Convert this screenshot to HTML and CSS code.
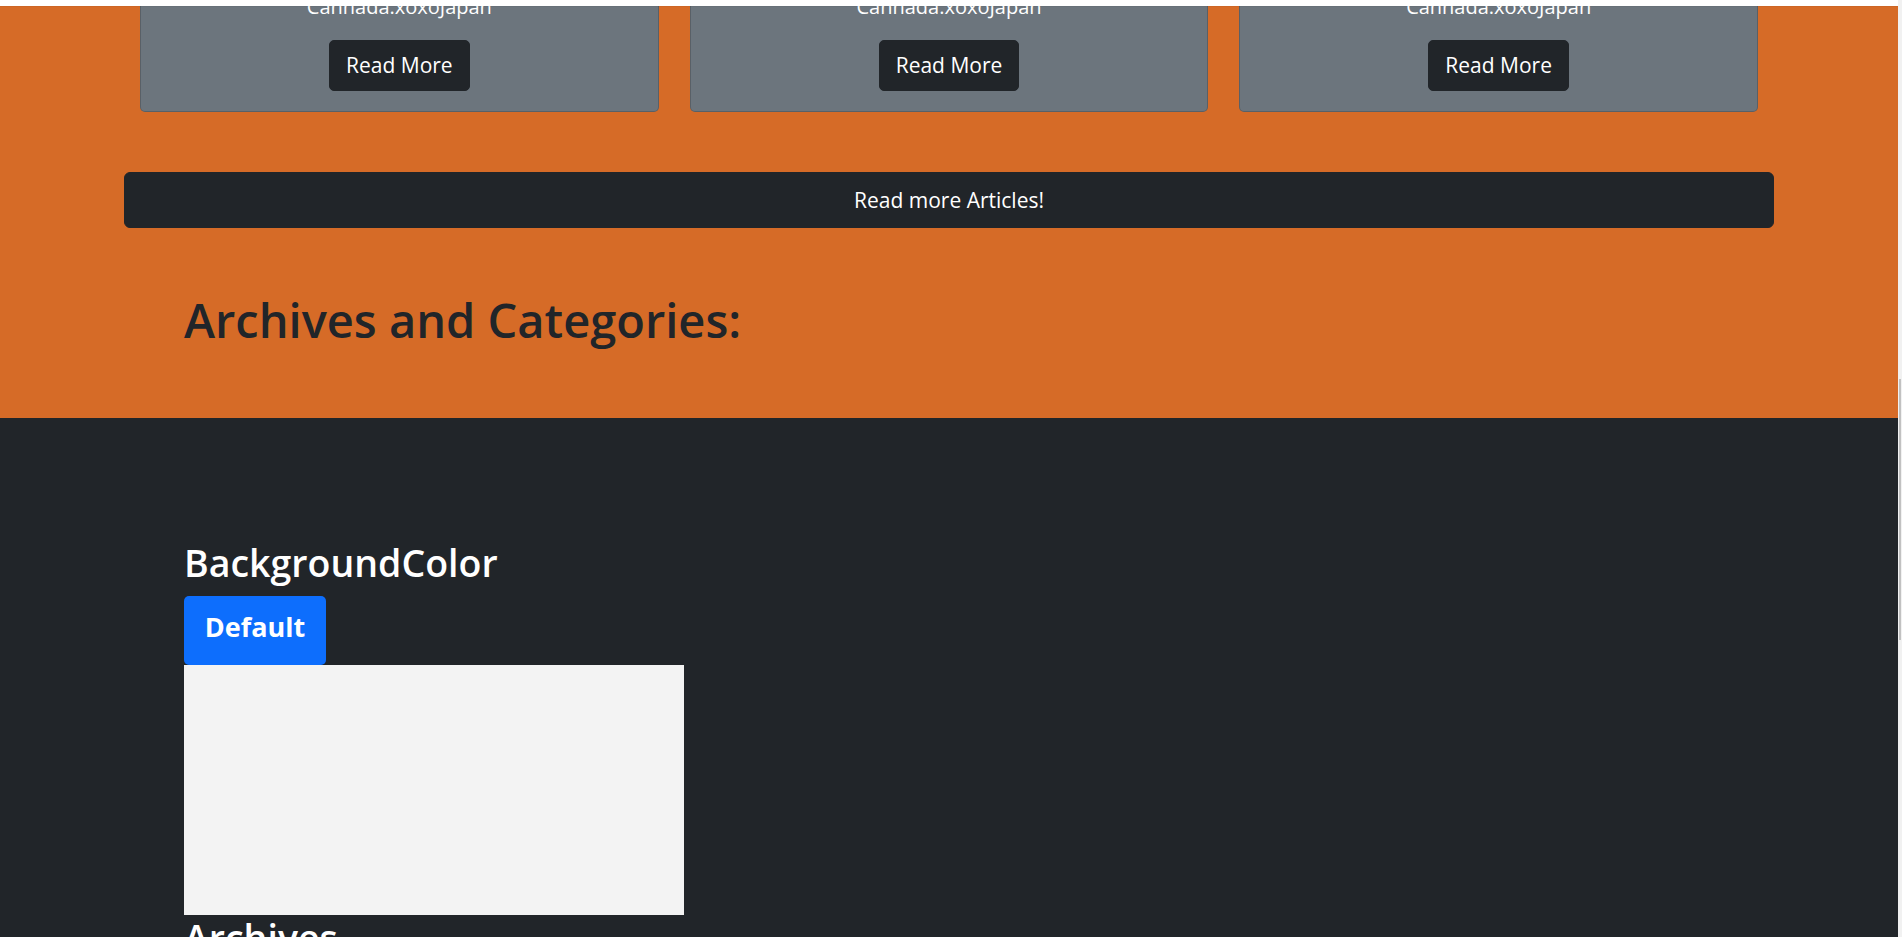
FILE: index.html
```html
<!DOCTYPE html>
<html lang="en">
<head>
<meta charset="utf-8">
<title>Articles</title>
<link rel="stylesheet" href="styles.css">
</head>
<body>
<div class="topbar"></div>
<div class="page">
  <section class="orange">
    <div class="wrap">
      <div class="cards">
        <div class="card">
          <p class="card-text">Cannada.xoxoJapan</p>
          <a class="btn-read" href="#">Read More</a>
        </div>
        <div class="card">
          <p class="card-text">Cannada.xoxoJapan</p>
          <a class="btn-read" href="#">Read More</a>
        </div>
        <div class="card">
          <p class="card-text">Cannada.xoxoJapan</p>
          <a class="btn-read" href="#">Read More</a>
        </div>
      </div>
      <a class="btn-more" href="#">Read more Articles!</a>
      <h1 class="arch-title">Archives and Categories:</h1>
    </div>
  </section>
  <section class="dark">
    <div class="inner">
      <h2 class="sub-title">BackgroundColor</h2>
      <button class="btn-default" type="button">Default</button>
      <div class="swatch"></div>
      <h2 class="sub-title">Archives</h2>
    </div>
  </section>
</div>
<div class="scrollbar"><div class="thumb"></div></div>
</body>
</html>
```

FILE: styles.css
```css
html, body {
  margin: 0;
  padding: 0;
  height: 100%;
  overflow: hidden;
}
body {
  font-family: "Open Sans", "Noto Sans", sans-serif;
  background: #212529;
  color: #212529;
}
.page {
  margin-right: 4px;
}
.topbar {
  position: fixed;
  top: 0;
  left: 0;
  right: 4px;
  height: 6px;
  background: #ffffff;
  box-shadow: 0 1px 0 rgba(0, 0, 0, 0.04);
  z-index: 5;
}
.scrollbar {
  position: fixed;
  top: 0;
  right: 0;
  width: 4px;
  height: 100%;
  background: #f1f1f1;
  z-index: 6;
}
.thumb {
  position: absolute;
  top: 379px;
  left: 1px;
  width: 2px;
  height: 261px;
  background: #c1c1c1;
}
.orange {
  background: rgb(214, 107, 39);
  padding-bottom: 69px;
}
.wrap {
  width: 1650px;
  margin: 0 auto;
}
.cards {
  display: grid;
  grid-template-columns: repeat(3, 1fr);
  gap: 31px;
  padding: 0 16px;
  margin-top: -29px;
}
.card {
  background: #6c757d;
  border: 1px solid rgba(0, 0, 0, 0.175);
  border-radius: 5px;
  padding: 20px;
  text-align: center;
  color: #ffffff;
}
.card-text {
  margin: 0 0 18px;
  font-size: 20px;
  line-height: 30px;
}
.btn-read {
  display: inline-block;
  background: #212529;
  color: #ffffff;
  text-decoration: none;
  font-size: 21px;
  line-height: 31px;
  padding: 9px 16px;
  border: 1px solid #212529;
  border-radius: 5px;
}
.btn-more {
  display: block;
  margin-top: 60px;
  background: #212529;
  color: #ffffff;
  text-decoration: none;
  text-align: center;
  font-size: 21px;
  line-height: 32px;
  padding: 11px 0;
  border: 1px solid #212529;
  border-radius: 6px;
}
.arch-title {
  margin: 63px 0 0 60px;
  font-size: 47px;
  font-weight: 600;
  line-height: 58px;
  color: #212529;
}
.dark {
  background: #212529;
  padding-top: 122px;
}
.inner {
  margin-left: 184px;
}
.sub-title {
  margin: 0;
  font-size: 37.5px;
  font-weight: 600;
  line-height: 46px;
  color: #ffffff;
}
.inner .sub-title:first-child {
  margin-bottom: 10px;
}
.btn-default {
  display: block;
  width: 142px;
  height: 69px;
  box-sizing: border-box;
  padding: 0 0 7px;
  margin: 0;
  background: #0d6efd;
  color: #ffffff;
  border: none;
  border-radius: 5px;
  font-family: "Open Sans", "Noto Sans", sans-serif;
  font-size: 27px;
  font-weight: 700;
  line-height: 32px;
  text-align: center;
}
.swatch {
  width: 500px;
  height: 250px;
  background: #f3f3f3;
}
```
